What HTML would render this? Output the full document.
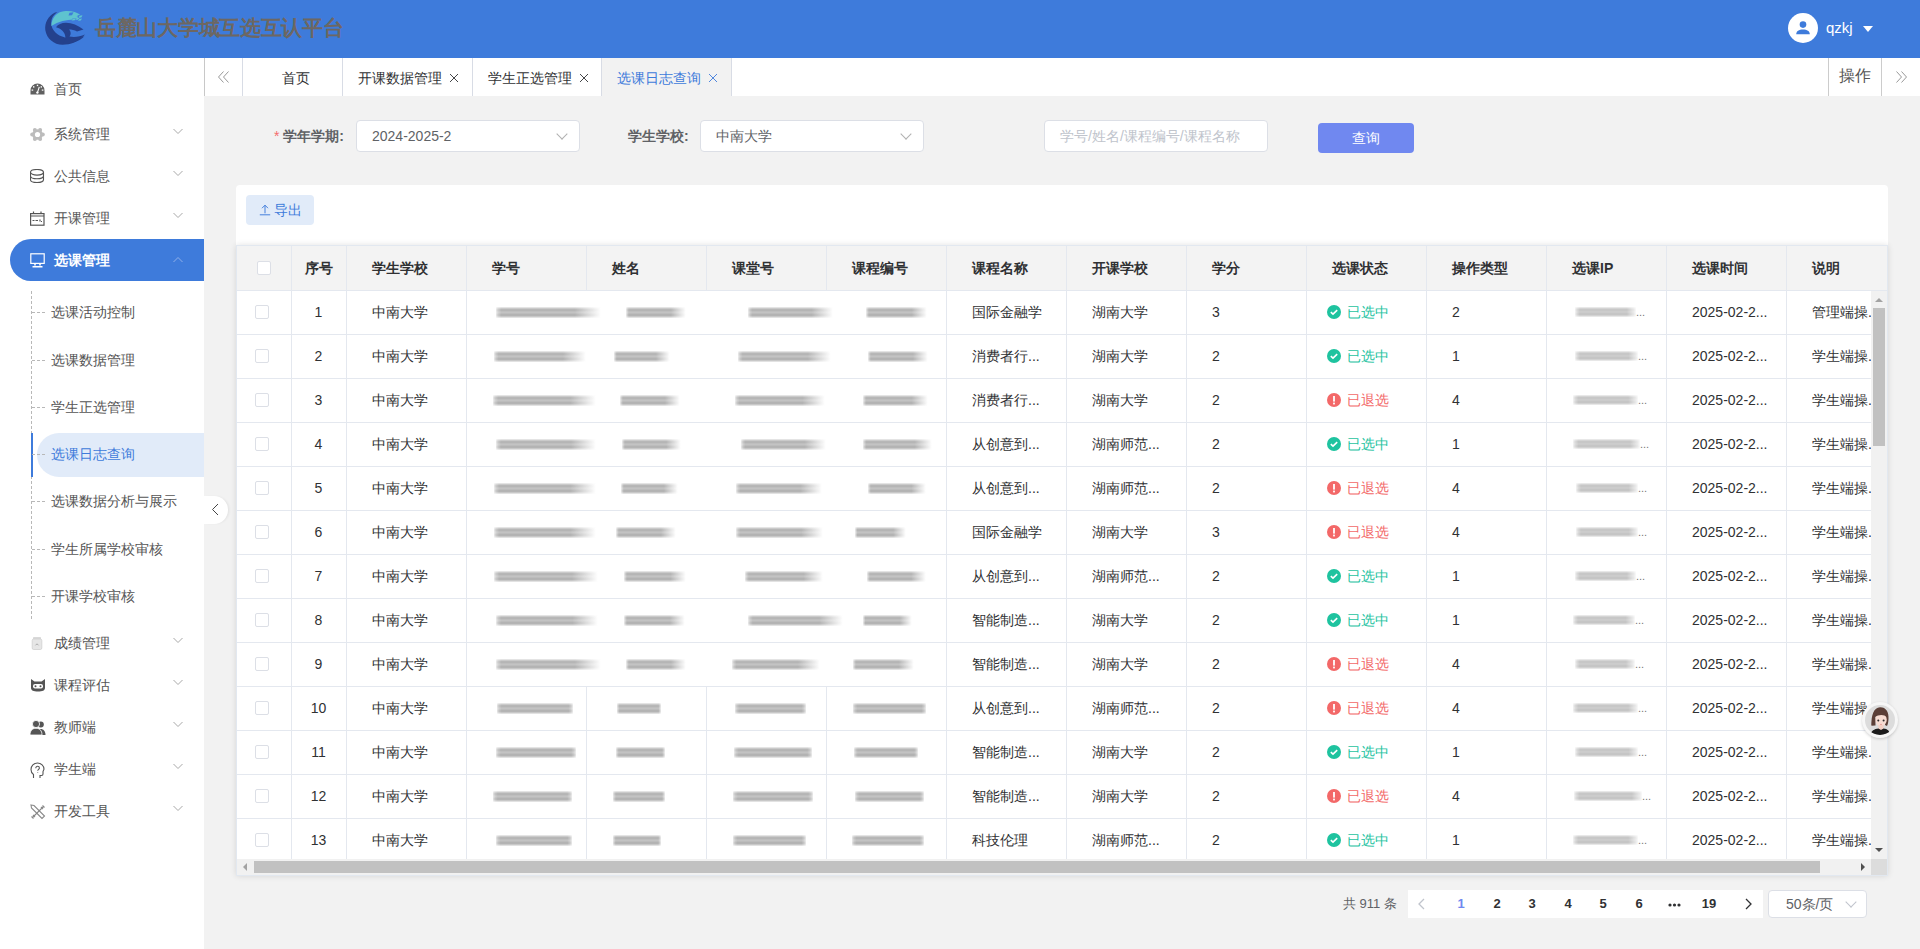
<!DOCTYPE html><html><head><meta charset="utf-8"><style>*{box-sizing:border-box;margin:0;padding:0}
html,body{width:1920px;height:949px;overflow:hidden}
body{position:relative;background:#f2f2f2;font-family:"Liberation Sans",sans-serif;font-size:14px;color:#303133}
.abs{position:absolute}
#hdr{position:absolute;left:0;top:0;width:1920px;height:58px;background:#3e7bdb}
#title{position:absolute;left:95px;top:14px;font-family:"Liberation Serif",serif;font-weight:bold;font-size:21px;color:#6d6762;letter-spacing:-0.3px;white-space:nowrap;line-height:28px}
#side{position:absolute;left:0;top:58px;width:204px;height:891px;background:#fff}
.mi{position:absolute;left:10px;width:194px;height:42px;color:#555;font-size:14px}
.mi .ic{position:absolute;left:20px;top:13px;width:16px;height:16px;line-height:0}
.mi .mt{position:absolute;left:44px;top:11px;line-height:20px}
.mi.act{background:#3e7bdb;border-radius:21px 0 0 21px;color:#fff;font-weight:bold}
.arr{position:absolute;left:163px;top:15px;width:10px;height:7px;line-height:0}

.vline{position:absolute;left:31px;top:291px;height:328px;width:0;border-left:1px dashed #b8b8b8}
.hdash{position:absolute;left:32px;width:13px;height:0;border-top:1px dashed #b8b8b8}
.si{position:absolute;left:51px;line-height:20px;color:#555;font-size:14px;white-space:nowrap}
.si.sact{color:#3e7bdb}
.subact{position:absolute;left:37px;width:167px;height:44px;background:#e1ebf9;border-radius:22px 0 0 22px}
.subbar{position:absolute;left:31px;width:2px;height:44px;background:#3e7bdb}
#tabs{position:absolute;left:204px;top:58px;width:1716px;height:38px;background:#fff}
.tab{position:absolute;top:0;height:38px;border-left:1px solid #d8dce5;line-height:40px;color:#303133;font-size:14px;white-space:nowrap}
.tab.act{background:#f2f2f2;color:#3e7bdb}
.tab .x{position:absolute;top:0;font-size:16px}
#card{position:absolute;left:236px;top:185px;width:1652px;height:691px;background:#fff;border-radius:4px}
.lbl{position:absolute;top:126px;font-weight:bold;color:#606266;line-height:20px;font-size:14px}
.sel{position:absolute;top:120px;height:32px;width:224px;background:#fff;border:1px solid #dcdfe6;border-radius:4px}
.sel .v{position:absolute;left:15px;top:5px;line-height:20px;color:#606266}
.sel .chev{position:absolute;right:13px;top:9px;width:8px;height:8px;border-right:1px solid #b0b0b0;border-bottom:1px solid #b0b0b0;transform:rotate(45deg)}
#tbl{position:absolute;left:236px;top:245px;width:1652px;height:631px;background:#fff;border:1px solid #e2e8f0;box-shadow:0 0 6px rgba(0,0,0,0.12)}
.thbg{position:absolute;left:237px;top:246px;width:1650px;height:44px;background:#f3f3f3}
.th{position:absolute;top:258px;line-height:20px;font-weight:bold;color:#303133;font-size:14px}
.td{position:absolute;line-height:22px;color:#303133;font-size:14px;white-space:nowrap}
.vb{position:absolute;width:1px;background:#e4e8ef}
.hb{position:absolute;left:237px;width:1634px;height:1px;background:#e4e8ef}
.cb{position:absolute;width:14px;height:14px;border:1px solid #dcdfe6;border-radius:2px;background:#fff}
.st{position:absolute;left:1327px;line-height:22px;font-size:14px;padding-left:20px;white-space:nowrap}
.st .sic{position:absolute;left:0;top:4px;line-height:0}
.st.ok{color:#1ec39f}
.st.no{color:#f36868}
.bl{position:absolute;height:11px;background:linear-gradient(to bottom,rgba(150,150,150,0) 0%,rgba(125,125,125,.75) 24%,rgba(200,200,200,.8) 50%,rgba(120,120,120,.75) 76%,rgba(150,150,150,0) 100%);filter:blur(1px);-webkit-mask-image:linear-gradient(to right,rgba(0,0,0,.5) 0%,#000 5%,#000 75%,rgba(0,0,0,0) 100%)}
.bl2{position:absolute;height:10px;background:linear-gradient(to bottom,rgba(150,150,150,0) 0%,rgba(130,130,130,.6) 24%,rgba(205,205,205,.7) 50%,rgba(125,125,125,.6) 76%,rgba(150,150,150,0) 100%);filter:blur(0.9px);-webkit-mask-image:linear-gradient(to right,rgba(0,0,0,.4) 0%,#000 8%,#000 85%,rgba(0,0,0,.2) 100%)}
</style></head><body><div id="hdr">
  <svg class="abs" style="left:0;top:0" width="100" height="58" viewBox="0 0 100 58">
    <path d="M55,12.5 C48,16 44.5,23 45.3,30 C46.5,38.5 54,44.8 62.5,44.8 C70.5,44.8 78.5,41.8 84.5,36.3 C78.5,38.8 71,39.3 65,37.5 C57,35.5 51.5,30 51.3,23.5 C51.2,18.5 53,15 57.5,12.3 Z" fill="#24418d"/>
    <path d="M51.3,26 C51.5,17.5 57,11.5 65.5,11 C72,10.7 77,12.3 80,14.5 L76.5,16.3 L80.5,17.2 L78,19.8 C70,19.2 60,20 51.3,26 Z" fill="#5ec3cf"/>
    <path d="M69.5,12.8 L73.5,12.3 L72,15.2 L68.5,15.5 Z M78.8,15.5 L82.5,15 L81,17.8 L77.5,18 Z M72.5,18.5 L76.5,18 L75,20.5 L71.2,20.8 Z M79,18.8 L82.3,18.3 L80.8,20.6 L77.5,20.9 Z" fill="#3e7bdb"/>
    <path d="M79.5,15.8 L82.5,15.3 L81.3,17.5 L78.5,17.8 Z M72.8,18.7 L76,18.3 L74.8,20.3 L71.6,20.6 Z M79.3,19 L82,18.6 L80.8,20.4 L78,20.7 Z" fill="#5ec3cf"/>
    <path d="M56,27.3 C58,24.3 61.5,22.8 66,22.8 C72,22.8 78,25.5 83.5,29.5 L77,31.5 C74.5,30.2 71.5,29.6 69,29.6 C71,31.5 71.3,34.5 69.5,36.5 C75,37.5 80,36.5 85,34.5 C80,40.5 72,44 63,43.5 C65,41 66,38 65,35 C63.8,31 60,28.2 56,27.3 Z" fill="#24418d"/>
  </svg>
  <div id="title">岳麓山大学城互选互认平台</div>
  <div class="abs" style="left:1788px;top:13px;width:30px;height:30px;border-radius:50%;background:#fff">
    <svg class="abs" style="left:8px;top:8px" width="14" height="14" viewBox="0 0 14 14"><circle cx="7" cy="3.6" r="3.3" fill="#3e7bdb"/><path d="M0.2 13.3C0.2 10 3 8.5 7 8.5S13.8 10 13.8 13.3Z" fill="#3e7bdb"/></svg>
  </div>
  <div class="abs" style="left:1826px;top:18px;color:#fff;font-size:15px;line-height:20px">qzkj</div>
  <div class="abs" style="left:1863px;top:26px;width:0;height:0;border-left:5px solid transparent;border-right:5px solid transparent;border-top:6px solid #fff"></div>
</div>
<div id="side">
</div>
<div class="abs" style="left:0;top:0"><div class="mi" style="top:68px"><span class="ic" style="top:14px"><svg width="15" height="13" viewBox="0 0 15 13" style="margin-top:1px"><path d="M7.5 0.5A7 7 0 0 0 0.5 7.5V11.5H14.5V7.5A7 7 0 0 0 7.5 0.5Z" fill="#606060"/><rect x="6.8" y="1.7" width="1.4" height="1.4" fill="#fff"/><rect x="3" y="3.2" width="1.4" height="1.4" fill="#fff"/><rect x="10.6" y="3.2" width="1.4" height="1.4" fill="#fff"/><rect x="1.6" y="6.5" width="1.6" height="1.2" fill="#fff"/><rect x="11.8" y="6.5" width="1.6" height="1.2" fill="#fff"/><path d="M9.3 3.8L7.6 9.2" stroke="#fff" stroke-width="1.1"/><circle cx="7.4" cy="9.6" r="1.2" fill="#fff"/></svg></span><span class="mt">首页</span></div>
<div class="mi" style="top:113px"><span class="ic" style="top:14px"><svg width="15" height="15" viewBox="0 0 15 15"><g fill="#bcbcbc"><circle cx="7.5" cy="7.5" r="5.3"/><circle cx="2.2" cy="7.5" r="2"/><circle cx="12.8" cy="7.5" r="2"/><circle cx="4.85" cy="2.9" r="2"/><circle cx="10.15" cy="2.9" r="2"/><circle cx="4.85" cy="12.1" r="2"/><circle cx="10.15" cy="12.1" r="2"/></g><circle cx="7.5" cy="7.5" r="2.6" fill="#fff"/></svg></span><span class="mt">系统管理</span><span class="arr"><svg width="10" height="7" viewBox="0 0 10 7" fill="none" stroke="#a8a8a8" stroke-width="1"><path d="M0.5 1L5 5.5L9.5 1"/></svg></span></div>
<div class="mi" style="top:155px"><span class="ic" style="top:14px"><svg width="15" height="15" viewBox="0 0 15 15" fill="none" stroke="#555" stroke-width="1.1"><ellipse cx="7" cy="3.3" rx="6.5" ry="2.8"/><path d="M0.5 3.3V7C0.5 8.6 3.4 9.8 7 9.8S13.5 8.6 13.5 7V3.3"/><path d="M0.5 7V10.7C0.5 12.3 3.4 13.5 7 13.5S13.5 12.3 13.5 10.7V7"/></svg></span><span class="mt">公共信息</span><span class="arr"><svg width="10" height="7" viewBox="0 0 10 7" fill="none" stroke="#a8a8a8" stroke-width="1"><path d="M0.5 1L5 5.5L9.5 1"/></svg></span></div>
<div class="mi" style="top:197px"><span class="ic" style="top:14px"><svg width="15" height="15" viewBox="0 0 15 15" fill="none" stroke="#555" stroke-width="1.2"><rect x="0.6" y="2.6" width="13.4" height="11.6"/><path d="M0.6 5H14M3.5 0.5V3M11 0.5V3M2.5 9.5H4.5M5.5 9.5H8M10 8.5V10.5M11 10.5H12"/></svg></span><span class="mt">开课管理</span><span class="arr"><svg width="10" height="7" viewBox="0 0 10 7" fill="none" stroke="#a8a8a8" stroke-width="1"><path d="M0.5 1L5 5.5L9.5 1"/></svg></span></div>
<div class="mi act" style="top:239px"><span class="ic" style="top:14px"><svg width="15" height="15" viewBox="0 0 15 15" fill="none" stroke="#fff" stroke-width="1.2"><rect x="0.8" y="0.8" width="13.4" height="9.6"/><path d="M5 10.5V12.5M10 10.5V12.5M2.5 13.8H12.5" stroke-width="1.6"/></svg></span><span class="mt">选课管理</span><span class="arr" style="top:17px"><svg width="10" height="7" viewBox="0 0 10 7" fill="none" stroke="#8fb0e8" stroke-width="1"><path d="M0.5 6L5 1.5L9.5 6"/></svg></span></div>
<div class="vline"></div>
<div class="hdash" style="top:312px"></div>
<div class="si" style="top:302px">选课活动控制</div>
<div class="hdash" style="top:360px"></div>
<div class="si" style="top:350px">选课数据管理</div>
<div class="hdash" style="top:407px"></div>
<div class="si" style="top:397px">学生正选管理</div>
<div class="subact" style="top:433px"></div><div class="subbar" style="top:433px"></div>
<div class="hdash" style="top:454px"></div>
<div class="si sact" style="top:444px">选课日志查询</div>
<div class="hdash" style="top:501px"></div>
<div class="si" style="top:491px">选课数据分析与展示</div>
<div class="hdash" style="top:549px"></div>
<div class="si" style="top:539px">学生所属学校审核</div>
<div class="hdash" style="top:596px"></div>
<div class="si" style="top:586px">开课学校审核</div>
<div class="mi" style="top:622px"><span class="ic" style="top:14px"><svg width="14" height="15" viewBox="0 0 14 15"><rect x="3" y="1" width="8" height="2.5" rx="0.8" fill="#d9d9d9"/><rect x="2.2" y="3" width="9.6" height="10.5" rx="1.5" fill="#e6e6e6" stroke="#cfcfcf" stroke-width="0.8"/><path d="M5.5 9.3L7 7.8L8.5 9.3" fill="none" stroke="#999" stroke-width="0.8"/></svg></span><span class="mt">成绩管理</span><span class="arr"><svg width="10" height="7" viewBox="0 0 10 7" fill="none" stroke="#a8a8a8" stroke-width="1"><path d="M0.5 1L5 5.5L9.5 1"/></svg></span></div>
<div class="mi" style="top:664px"><span class="ic" style="top:14px"><svg width="16" height="14" viewBox="0 0 16 14"><path d="M1 1L4.5 3.5H11.5L15 1V10C15 12.5 12.5 13.5 8 13.5S1 12.5 1 10Z" fill="#555"/><rect x="3" y="6" width="10" height="4.5" rx="2" fill="#fff"/><circle cx="5.5" cy="8.2" r="1" fill="#555"/><circle cx="10.5" cy="8.2" r="1" fill="#555"/></svg></span><span class="mt">课程评估</span><span class="arr"><svg width="10" height="7" viewBox="0 0 10 7" fill="none" stroke="#a8a8a8" stroke-width="1"><path d="M0.5 1L5 5.5L9.5 1"/></svg></span></div>
<div class="mi" style="top:706px"><span class="ic" style="top:14px"><svg width="16" height="15" viewBox="0 0 16 15"><circle cx="10.8" cy="4.5" r="3" fill="#555"/><path d="M8 15C8 11 9 9 11 9S15.5 11 15.5 15Z" fill="#555"/><circle cx="6" cy="4" r="3.6" fill="#555" stroke="#fff" stroke-width="0.8"/><path d="M0 15C0 10.5 2.5 8.3 6 8.3S12 10.5 12 15Z" fill="#555" stroke="#fff" stroke-width="0.8"/></svg></span><span class="mt">教师端</span><span class="arr"><svg width="10" height="7" viewBox="0 0 10 7" fill="none" stroke="#a8a8a8" stroke-width="1"><path d="M0.5 1L5 5.5L9.5 1"/></svg></span></div>
<div class="mi" style="top:748px"><span class="ic" style="top:14px"><svg width="15" height="17" viewBox="0 0 15 17" fill="none" stroke="#555" stroke-width="1.1"><path d="M3.5 16V12.5C1.8 11.3 1 9.5 1 7.5C1 3.8 3.8 1 7.5 1S14 3.8 14 7.2L13 9.5V12C13 12.8 12.3 13.5 11.5 13.5H10V16"/><path d="M5.8 6.2C5.8 5 6.6 4.3 7.6 4.3S9.4 5 9.4 6C9.4 7.3 7.7 7.5 7.7 8.8M7.7 10.3V10.8"/></svg></span><span class="mt">学生端</span><span class="arr"><svg width="10" height="7" viewBox="0 0 10 7" fill="none" stroke="#a8a8a8" stroke-width="1"><path d="M0.5 1L5 5.5L9.5 1"/></svg></span></div>
<div class="mi" style="top:790px"><span class="ic" style="top:14px"><svg width="16" height="16" viewBox="0 0 16 16" fill="none" stroke="#888" stroke-width="1.1"><path d="M1 1L4 1.5L14.5 12L12 14.5L1.5 4Z"/><path d="M2.5 13.5L13.5 2.5M1.5 12.5L3.5 14.5M12.5 1.5L14.5 3.5M3 11L5 13M11 3L13 5"/></svg></span><span class="mt">开发工具</span><span class="arr"><svg width="10" height="7" viewBox="0 0 10 7" fill="none" stroke="#a8a8a8" stroke-width="1"><path d="M0.5 1L5 5.5L9.5 1"/></svg></span></div></div>
<div id="tabs">
  <div class="tab" style="left:0;width:38px;border-color:#c8c8c8"><svg class="abs" style="left:13px;top:13px" width="11" height="12" viewBox="0 0 11 12" fill="none" stroke="#999" stroke-width="1"><path d="M5.5 0.5L0.5 6L5.5 11.5M10.5 0.5L5.5 6L10.5 11.5"/></svg></div>
  <div class="tab" style="left:38px;width:100px"><span class="abs" style="left:39px">首页</span></div>
  <div class="tab" style="left:138px;width:130px"><span class="abs" style="left:15px">开课数据管理</span><svg class="abs" style="left:106px;top:15px" width="10" height="10" viewBox="0 0 10 10" stroke="#303133" stroke-width="0.9"><path d="M1 1L9 9M9 1L1 9"/></svg></div>
  <div class="tab" style="left:268px;width:129px"><span class="abs" style="left:15px">学生正选管理</span><svg class="abs" style="left:106px;top:15px" width="10" height="10" viewBox="0 0 10 10" stroke="#303133" stroke-width="0.9"><path d="M1 1L9 9M9 1L1 9"/></svg></div>
  <div class="tab act" style="left:397px;width:130px"><span class="abs" style="left:15px">选课日志查询</span><svg class="abs" style="left:106px;top:15px" width="10" height="10" viewBox="0 0 10 10" stroke="#3e7bdb" stroke-width="0.9"><path d="M1 1L9 9M9 1L1 9"/></svg></div>
  <div class="tab" style="left:527px;width:0"></div>
  <div class="tab" style="left:1624px;width:53px;font-size:16px;color:#555;border-color:#ccc"><span class="abs" style="left:10px;top:-2px">操作</span></div>
  <div class="tab" style="left:1677px;width:39px;border-color:#ccc"><svg class="abs" style="left:14px;top:13px" width="11" height="12" viewBox="0 0 11 12" fill="none" stroke="#999" stroke-width="1"><path d="M0.5 0.5L5.5 6L0.5 11.5M5.5 0.5L10.5 6L5.5 11.5"/></svg></div>
</div>
<!-- filters -->
<div class="lbl" style="left:274px"><span style="color:#f56c6c;font-weight:normal">*</span> 学年学期:</div>
<div class="sel" style="left:356px"><span class="v">2024-2025-2</span><span class="chev"></span></div>
<div class="lbl" style="left:628px">学生学校:</div>
<div class="sel" style="left:700px"><span class="v">中南大学</span><span class="chev"></span></div>
<div class="sel" style="left:1044px;width:224px"><span class="v" style="color:#c0c4cc">学号/姓名/课程编号/课程名称</span></div>
<div class="abs" style="left:1318px;top:123px;width:96px;height:30px;background:#7088f0;border-radius:4px;color:#fff;text-align:center;line-height:30px">查询</div>
<div id="card"></div>
<div class="abs" style="left:246px;top:195px;width:68px;height:30px;background:#e1ebf9;border-radius:4px;color:#3e7bdb;line-height:30px;font-size:14px"><svg class="abs" style="left:13px;top:9px" width="12" height="12" viewBox="0 0 12 12" fill="none" stroke="#3e7bdb" stroke-width="0.95"><path d="M3 4.2L6 1.2L9 4.2M6 1.2V9.3M0.8 10.8H11.2"/></svg><span class="abs" style="left:28px">导出</span></div>
<div id="tbl"></div>
<div class="thbg"></div>
<div class="hb" style="top:290px;width:1650px"></div>
<div class="cb" style="left:257px;top:261px;background:#fff"></div>
<div class="th" style="left:291px;width:55px;text-align:center">序号</div>
<div class="th" style="left:372px">学生学校</div>
<div class="th" style="left:492px">学号</div>
<div class="th" style="left:612px">姓名</div>
<div class="th" style="left:732px">课堂号</div>
<div class="th" style="left:852px">课程编号</div>
<div class="th" style="left:972px">课程名称</div>
<div class="th" style="left:1092px">开课学校</div>
<div class="th" style="left:1212px">学分</div>
<div class="th" style="left:1332px">选课状态</div>
<div class="th" style="left:1452px">操作类型</div>
<div class="th" style="left:1572px">选课IP</div>
<div class="th" style="left:1692px">选课时间</div>
<div class="th" style="left:1812px">说明</div>
<div class="vb" style="left:291px;top:246px;height:44px"></div>
<div class="vb" style="left:346px;top:246px;height:44px"></div>
<div class="vb" style="left:466px;top:246px;height:44px"></div>
<div class="vb" style="left:586px;top:246px;height:44px"></div>
<div class="vb" style="left:706px;top:246px;height:44px"></div>
<div class="vb" style="left:826px;top:246px;height:44px"></div>
<div class="vb" style="left:946px;top:246px;height:44px"></div>
<div class="vb" style="left:1066px;top:246px;height:44px"></div>
<div class="vb" style="left:1186px;top:246px;height:44px"></div>
<div class="vb" style="left:1306px;top:246px;height:44px"></div>
<div class="vb" style="left:1426px;top:246px;height:44px"></div>
<div class="vb" style="left:1546px;top:246px;height:44px"></div>
<div class="vb" style="left:1666px;top:246px;height:44px"></div>
<div class="vb" style="left:1786px;top:246px;height:44px"></div>
<div class="hb" style="top:290px"></div>
<div class="cb" style="left:255px;top:305px"></div>
<div class="td" style="left:291px;width:55px;text-align:center;top:301px">1</div>
<div class="td" style="left:372px;top:301px">中南大学</div>
<div class="td" style="left:972px;top:301px">国际金融学</div>
<div class="td" style="left:1092px;top:301px">湖南大学</div>
<div class="td" style="left:1212px;top:301px">3</div>
<div class="st ok" style="top:301px"><span class="sic"><svg width="14" height="14" viewBox="0 0 14 14"><circle cx="7" cy="7" r="7" fill="#1ec39f"/><path d="M3.8 7.2L6 9.2L10.2 5.2" fill="none" stroke="#fff" stroke-width="1.6"/></svg></span>已选中</div>
<div class="td" style="left:1452px;top:301px">2</div>
<div class="td" style="left:1692px;top:301px">2025-02-2...</div>
<div class="td" style="left:1812px;top:301px">管理端操...</div>
<div class="bl" style="left:496px;width:105px;top:307px"></div>
<div class="bl" style="left:626px;width:60px;top:307px"></div>
<div class="bl" style="left:748px;width:85px;top:307px"></div>
<div class="bl" style="left:866px;width:61px;top:307px"></div>
<div class="bl2" style="left:1575px;width:61px;top:307px"></div>
<div class="td" style="left:1636px;top:301px;color:#777;font-size:11px;letter-spacing:0px">...</div>
<div class="vb" style="left:291px;top:290px;height:44px"></div>
<div class="vb" style="left:346px;top:290px;height:44px"></div>
<div class="vb" style="left:466px;top:290px;height:44px"></div>
<div class="vb" style="left:946px;top:290px;height:44px"></div>
<div class="vb" style="left:1066px;top:290px;height:44px"></div>
<div class="vb" style="left:1186px;top:290px;height:44px"></div>
<div class="vb" style="left:1306px;top:290px;height:44px"></div>
<div class="vb" style="left:1426px;top:290px;height:44px"></div>
<div class="vb" style="left:1546px;top:290px;height:44px"></div>
<div class="vb" style="left:1666px;top:290px;height:44px"></div>
<div class="vb" style="left:1786px;top:290px;height:44px"></div>
<div class="hb" style="top:334px"></div>
<div class="cb" style="left:255px;top:349px"></div>
<div class="td" style="left:291px;width:55px;text-align:center;top:345px">2</div>
<div class="td" style="left:372px;top:345px">中南大学</div>
<div class="td" style="left:972px;top:345px">消费者行...</div>
<div class="td" style="left:1092px;top:345px">湖南大学</div>
<div class="td" style="left:1212px;top:345px">2</div>
<div class="st ok" style="top:345px"><span class="sic"><svg width="14" height="14" viewBox="0 0 14 14"><circle cx="7" cy="7" r="7" fill="#1ec39f"/><path d="M3.8 7.2L6 9.2L10.2 5.2" fill="none" stroke="#fff" stroke-width="1.6"/></svg></span>已选中</div>
<div class="td" style="left:1452px;top:345px">1</div>
<div class="td" style="left:1692px;top:345px">2025-02-2...</div>
<div class="td" style="left:1812px;top:345px">学生端操...</div>
<div class="bl" style="left:494px;width:92px;top:351px"></div>
<div class="bl" style="left:614px;width:56px;top:351px"></div>
<div class="bl" style="left:738px;width:93px;top:351px"></div>
<div class="bl" style="left:868px;width:60px;top:351px"></div>
<div class="bl2" style="left:1575px;width:63px;top:351px"></div>
<div class="td" style="left:1638px;top:345px;color:#777;font-size:11px;letter-spacing:0px">...</div>
<div class="vb" style="left:291px;top:334px;height:44px"></div>
<div class="vb" style="left:346px;top:334px;height:44px"></div>
<div class="vb" style="left:466px;top:334px;height:44px"></div>
<div class="vb" style="left:946px;top:334px;height:44px"></div>
<div class="vb" style="left:1066px;top:334px;height:44px"></div>
<div class="vb" style="left:1186px;top:334px;height:44px"></div>
<div class="vb" style="left:1306px;top:334px;height:44px"></div>
<div class="vb" style="left:1426px;top:334px;height:44px"></div>
<div class="vb" style="left:1546px;top:334px;height:44px"></div>
<div class="vb" style="left:1666px;top:334px;height:44px"></div>
<div class="vb" style="left:1786px;top:334px;height:44px"></div>
<div class="hb" style="top:378px"></div>
<div class="cb" style="left:255px;top:393px"></div>
<div class="td" style="left:291px;width:55px;text-align:center;top:389px">3</div>
<div class="td" style="left:372px;top:389px">中南大学</div>
<div class="td" style="left:972px;top:389px">消费者行...</div>
<div class="td" style="left:1092px;top:389px">湖南大学</div>
<div class="td" style="left:1212px;top:389px">2</div>
<div class="st no" style="top:389px"><span class="sic"><svg width="14" height="14" viewBox="0 0 14 14"><circle cx="7" cy="7" r="7" fill="#f36868"/><rect x="6.1" y="3" width="1.8" height="5.6" fill="#fff"/><rect x="6.1" y="9.6" width="1.8" height="1.8" fill="#fff"/></svg></span>已退选</div>
<div class="td" style="left:1452px;top:389px">4</div>
<div class="td" style="left:1692px;top:389px">2025-02-2...</div>
<div class="td" style="left:1812px;top:389px">学生端操...</div>
<div class="bl" style="left:493px;width:103px;top:395px"></div>
<div class="bl" style="left:620px;width:60px;top:395px"></div>
<div class="bl" style="left:735px;width:90px;top:395px"></div>
<div class="bl" style="left:863px;width:65px;top:395px"></div>
<div class="bl2" style="left:1573px;width:65px;top:395px"></div>
<div class="td" style="left:1638px;top:389px;color:#777;font-size:11px;letter-spacing:0px">...</div>
<div class="vb" style="left:291px;top:378px;height:44px"></div>
<div class="vb" style="left:346px;top:378px;height:44px"></div>
<div class="vb" style="left:466px;top:378px;height:44px"></div>
<div class="vb" style="left:946px;top:378px;height:44px"></div>
<div class="vb" style="left:1066px;top:378px;height:44px"></div>
<div class="vb" style="left:1186px;top:378px;height:44px"></div>
<div class="vb" style="left:1306px;top:378px;height:44px"></div>
<div class="vb" style="left:1426px;top:378px;height:44px"></div>
<div class="vb" style="left:1546px;top:378px;height:44px"></div>
<div class="vb" style="left:1666px;top:378px;height:44px"></div>
<div class="vb" style="left:1786px;top:378px;height:44px"></div>
<div class="hb" style="top:422px"></div>
<div class="cb" style="left:255px;top:437px"></div>
<div class="td" style="left:291px;width:55px;text-align:center;top:433px">4</div>
<div class="td" style="left:372px;top:433px">中南大学</div>
<div class="td" style="left:972px;top:433px">从创意到...</div>
<div class="td" style="left:1092px;top:433px">湖南师范...</div>
<div class="td" style="left:1212px;top:433px">2</div>
<div class="st ok" style="top:433px"><span class="sic"><svg width="14" height="14" viewBox="0 0 14 14"><circle cx="7" cy="7" r="7" fill="#1ec39f"/><path d="M3.8 7.2L6 9.2L10.2 5.2" fill="none" stroke="#fff" stroke-width="1.6"/></svg></span>已选中</div>
<div class="td" style="left:1452px;top:433px">1</div>
<div class="td" style="left:1692px;top:433px">2025-02-2...</div>
<div class="td" style="left:1812px;top:433px">学生端操...</div>
<div class="bl" style="left:496px;width:100px;top:439px"></div>
<div class="bl" style="left:622px;width:59px;top:439px"></div>
<div class="bl" style="left:741px;width:85px;top:439px"></div>
<div class="bl" style="left:863px;width:69px;top:439px"></div>
<div class="bl2" style="left:1573px;width:67px;top:439px"></div>
<div class="td" style="left:1640px;top:433px;color:#777;font-size:11px;letter-spacing:0px">...</div>
<div class="vb" style="left:291px;top:422px;height:44px"></div>
<div class="vb" style="left:346px;top:422px;height:44px"></div>
<div class="vb" style="left:466px;top:422px;height:44px"></div>
<div class="vb" style="left:946px;top:422px;height:44px"></div>
<div class="vb" style="left:1066px;top:422px;height:44px"></div>
<div class="vb" style="left:1186px;top:422px;height:44px"></div>
<div class="vb" style="left:1306px;top:422px;height:44px"></div>
<div class="vb" style="left:1426px;top:422px;height:44px"></div>
<div class="vb" style="left:1546px;top:422px;height:44px"></div>
<div class="vb" style="left:1666px;top:422px;height:44px"></div>
<div class="vb" style="left:1786px;top:422px;height:44px"></div>
<div class="hb" style="top:466px"></div>
<div class="cb" style="left:255px;top:481px"></div>
<div class="td" style="left:291px;width:55px;text-align:center;top:477px">5</div>
<div class="td" style="left:372px;top:477px">中南大学</div>
<div class="td" style="left:972px;top:477px">从创意到...</div>
<div class="td" style="left:1092px;top:477px">湖南师范...</div>
<div class="td" style="left:1212px;top:477px">2</div>
<div class="st no" style="top:477px"><span class="sic"><svg width="14" height="14" viewBox="0 0 14 14"><circle cx="7" cy="7" r="7" fill="#f36868"/><rect x="6.1" y="3" width="1.8" height="5.6" fill="#fff"/><rect x="6.1" y="9.6" width="1.8" height="1.8" fill="#fff"/></svg></span>已退选</div>
<div class="td" style="left:1452px;top:477px">4</div>
<div class="td" style="left:1692px;top:477px">2025-02-2...</div>
<div class="td" style="left:1812px;top:477px">学生端操...</div>
<div class="bl" style="left:494px;width:102px;top:483px"></div>
<div class="bl" style="left:621px;width:57px;top:483px"></div>
<div class="bl" style="left:736px;width:86px;top:483px"></div>
<div class="bl" style="left:868px;width:58px;top:483px"></div>
<div class="bl2" style="left:1576px;width:62px;top:483px"></div>
<div class="td" style="left:1638px;top:477px;color:#777;font-size:11px;letter-spacing:0px">...</div>
<div class="vb" style="left:291px;top:466px;height:44px"></div>
<div class="vb" style="left:346px;top:466px;height:44px"></div>
<div class="vb" style="left:466px;top:466px;height:44px"></div>
<div class="vb" style="left:946px;top:466px;height:44px"></div>
<div class="vb" style="left:1066px;top:466px;height:44px"></div>
<div class="vb" style="left:1186px;top:466px;height:44px"></div>
<div class="vb" style="left:1306px;top:466px;height:44px"></div>
<div class="vb" style="left:1426px;top:466px;height:44px"></div>
<div class="vb" style="left:1546px;top:466px;height:44px"></div>
<div class="vb" style="left:1666px;top:466px;height:44px"></div>
<div class="vb" style="left:1786px;top:466px;height:44px"></div>
<div class="hb" style="top:510px"></div>
<div class="cb" style="left:255px;top:525px"></div>
<div class="td" style="left:291px;width:55px;text-align:center;top:521px">6</div>
<div class="td" style="left:372px;top:521px">中南大学</div>
<div class="td" style="left:972px;top:521px">国际金融学</div>
<div class="td" style="left:1092px;top:521px">湖南大学</div>
<div class="td" style="left:1212px;top:521px">3</div>
<div class="st no" style="top:521px"><span class="sic"><svg width="14" height="14" viewBox="0 0 14 14"><circle cx="7" cy="7" r="7" fill="#f36868"/><rect x="6.1" y="3" width="1.8" height="5.6" fill="#fff"/><rect x="6.1" y="9.6" width="1.8" height="1.8" fill="#fff"/></svg></span>已退选</div>
<div class="td" style="left:1452px;top:521px">4</div>
<div class="td" style="left:1692px;top:521px">2025-02-2...</div>
<div class="td" style="left:1812px;top:521px">学生端操...</div>
<div class="bl" style="left:494px;width:102px;top:527px"></div>
<div class="bl" style="left:616px;width:60px;top:527px"></div>
<div class="bl" style="left:736px;width:87px;top:527px"></div>
<div class="bl" style="left:855px;width:51px;top:527px"></div>
<div class="bl2" style="left:1576px;width:62px;top:527px"></div>
<div class="td" style="left:1638px;top:521px;color:#777;font-size:11px;letter-spacing:0px">...</div>
<div class="vb" style="left:291px;top:510px;height:44px"></div>
<div class="vb" style="left:346px;top:510px;height:44px"></div>
<div class="vb" style="left:466px;top:510px;height:44px"></div>
<div class="vb" style="left:946px;top:510px;height:44px"></div>
<div class="vb" style="left:1066px;top:510px;height:44px"></div>
<div class="vb" style="left:1186px;top:510px;height:44px"></div>
<div class="vb" style="left:1306px;top:510px;height:44px"></div>
<div class="vb" style="left:1426px;top:510px;height:44px"></div>
<div class="vb" style="left:1546px;top:510px;height:44px"></div>
<div class="vb" style="left:1666px;top:510px;height:44px"></div>
<div class="vb" style="left:1786px;top:510px;height:44px"></div>
<div class="hb" style="top:554px"></div>
<div class="cb" style="left:255px;top:569px"></div>
<div class="td" style="left:291px;width:55px;text-align:center;top:565px">7</div>
<div class="td" style="left:372px;top:565px">中南大学</div>
<div class="td" style="left:972px;top:565px">从创意到...</div>
<div class="td" style="left:1092px;top:565px">湖南师范...</div>
<div class="td" style="left:1212px;top:565px">2</div>
<div class="st ok" style="top:565px"><span class="sic"><svg width="14" height="14" viewBox="0 0 14 14"><circle cx="7" cy="7" r="7" fill="#1ec39f"/><path d="M3.8 7.2L6 9.2L10.2 5.2" fill="none" stroke="#fff" stroke-width="1.6"/></svg></span>已选中</div>
<div class="td" style="left:1452px;top:565px">1</div>
<div class="td" style="left:1692px;top:565px">2025-02-2...</div>
<div class="td" style="left:1812px;top:565px">学生端操...</div>
<div class="bl" style="left:494px;width:104px;top:571px"></div>
<div class="bl" style="left:624px;width:62px;top:571px"></div>
<div class="bl" style="left:745px;width:78px;top:571px"></div>
<div class="bl" style="left:867px;width:59px;top:571px"></div>
<div class="bl2" style="left:1575px;width:61px;top:571px"></div>
<div class="td" style="left:1636px;top:565px;color:#777;font-size:11px;letter-spacing:0px">...</div>
<div class="vb" style="left:291px;top:554px;height:44px"></div>
<div class="vb" style="left:346px;top:554px;height:44px"></div>
<div class="vb" style="left:466px;top:554px;height:44px"></div>
<div class="vb" style="left:946px;top:554px;height:44px"></div>
<div class="vb" style="left:1066px;top:554px;height:44px"></div>
<div class="vb" style="left:1186px;top:554px;height:44px"></div>
<div class="vb" style="left:1306px;top:554px;height:44px"></div>
<div class="vb" style="left:1426px;top:554px;height:44px"></div>
<div class="vb" style="left:1546px;top:554px;height:44px"></div>
<div class="vb" style="left:1666px;top:554px;height:44px"></div>
<div class="vb" style="left:1786px;top:554px;height:44px"></div>
<div class="hb" style="top:598px"></div>
<div class="cb" style="left:255px;top:613px"></div>
<div class="td" style="left:291px;width:55px;text-align:center;top:609px">8</div>
<div class="td" style="left:372px;top:609px">中南大学</div>
<div class="td" style="left:972px;top:609px">智能制造...</div>
<div class="td" style="left:1092px;top:609px">湖南大学</div>
<div class="td" style="left:1212px;top:609px">2</div>
<div class="st ok" style="top:609px"><span class="sic"><svg width="14" height="14" viewBox="0 0 14 14"><circle cx="7" cy="7" r="7" fill="#1ec39f"/><path d="M3.8 7.2L6 9.2L10.2 5.2" fill="none" stroke="#fff" stroke-width="1.6"/></svg></span>已选中</div>
<div class="td" style="left:1452px;top:609px">1</div>
<div class="td" style="left:1692px;top:609px">2025-02-2...</div>
<div class="td" style="left:1812px;top:609px">学生端操...</div>
<div class="bl" style="left:496px;width:102px;top:615px"></div>
<div class="bl" style="left:624px;width:61px;top:615px"></div>
<div class="bl" style="left:748px;width:95px;top:615px"></div>
<div class="bl" style="left:863px;width:49px;top:615px"></div>
<div class="bl2" style="left:1573px;width:62px;top:615px"></div>
<div class="td" style="left:1635px;top:609px;color:#777;font-size:11px;letter-spacing:0px">...</div>
<div class="vb" style="left:291px;top:598px;height:44px"></div>
<div class="vb" style="left:346px;top:598px;height:44px"></div>
<div class="vb" style="left:466px;top:598px;height:44px"></div>
<div class="vb" style="left:946px;top:598px;height:44px"></div>
<div class="vb" style="left:1066px;top:598px;height:44px"></div>
<div class="vb" style="left:1186px;top:598px;height:44px"></div>
<div class="vb" style="left:1306px;top:598px;height:44px"></div>
<div class="vb" style="left:1426px;top:598px;height:44px"></div>
<div class="vb" style="left:1546px;top:598px;height:44px"></div>
<div class="vb" style="left:1666px;top:598px;height:44px"></div>
<div class="vb" style="left:1786px;top:598px;height:44px"></div>
<div class="hb" style="top:642px"></div>
<div class="cb" style="left:255px;top:657px"></div>
<div class="td" style="left:291px;width:55px;text-align:center;top:653px">9</div>
<div class="td" style="left:372px;top:653px">中南大学</div>
<div class="td" style="left:972px;top:653px">智能制造...</div>
<div class="td" style="left:1092px;top:653px">湖南大学</div>
<div class="td" style="left:1212px;top:653px">2</div>
<div class="st no" style="top:653px"><span class="sic"><svg width="14" height="14" viewBox="0 0 14 14"><circle cx="7" cy="7" r="7" fill="#f36868"/><rect x="6.1" y="3" width="1.8" height="5.6" fill="#fff"/><rect x="6.1" y="9.6" width="1.8" height="1.8" fill="#fff"/></svg></span>已退选</div>
<div class="td" style="left:1452px;top:653px">4</div>
<div class="td" style="left:1692px;top:653px">2025-02-2...</div>
<div class="td" style="left:1812px;top:653px">学生端操...</div>
<div class="bl" style="left:496px;width:105px;top:659px"></div>
<div class="bl" style="left:626px;width:60px;top:659px"></div>
<div class="bl" style="left:732px;width:88px;top:659px"></div>
<div class="bl" style="left:853px;width:61px;top:659px"></div>
<div class="bl2" style="left:1575px;width:60px;top:659px"></div>
<div class="td" style="left:1635px;top:653px;color:#777;font-size:11px;letter-spacing:0px">...</div>
<div class="vb" style="left:291px;top:642px;height:44px"></div>
<div class="vb" style="left:346px;top:642px;height:44px"></div>
<div class="vb" style="left:466px;top:642px;height:44px"></div>
<div class="vb" style="left:946px;top:642px;height:44px"></div>
<div class="vb" style="left:1066px;top:642px;height:44px"></div>
<div class="vb" style="left:1186px;top:642px;height:44px"></div>
<div class="vb" style="left:1306px;top:642px;height:44px"></div>
<div class="vb" style="left:1426px;top:642px;height:44px"></div>
<div class="vb" style="left:1546px;top:642px;height:44px"></div>
<div class="vb" style="left:1666px;top:642px;height:44px"></div>
<div class="vb" style="left:1786px;top:642px;height:44px"></div>
<div class="hb" style="top:686px"></div>
<div class="cb" style="left:255px;top:701px"></div>
<div class="td" style="left:291px;width:55px;text-align:center;top:697px">10</div>
<div class="td" style="left:372px;top:697px">中南大学</div>
<div class="td" style="left:972px;top:697px">从创意到...</div>
<div class="td" style="left:1092px;top:697px">湖南师范...</div>
<div class="td" style="left:1212px;top:697px">2</div>
<div class="st no" style="top:697px"><span class="sic"><svg width="14" height="14" viewBox="0 0 14 14"><circle cx="7" cy="7" r="7" fill="#f36868"/><rect x="6.1" y="3" width="1.8" height="5.6" fill="#fff"/><rect x="6.1" y="9.6" width="1.8" height="1.8" fill="#fff"/></svg></span>已退选</div>
<div class="td" style="left:1452px;top:697px">4</div>
<div class="td" style="left:1692px;top:697px">2025-02-2...</div>
<div class="td" style="left:1812px;top:697px">学生端操...</div>
<div class="bl" style="left:497px;width:76px;top:703px;-webkit-mask-image:linear-gradient(to right,rgba(0,0,0,.6) 0%,#000 6%,#000 94%,rgba(0,0,0,.5) 100%)"></div>
<div class="bl" style="left:617px;width:44px;top:703px;-webkit-mask-image:linear-gradient(to right,rgba(0,0,0,.6) 0%,#000 6%,#000 94%,rgba(0,0,0,.5) 100%)"></div>
<div class="bl" style="left:735px;width:71px;top:703px;-webkit-mask-image:linear-gradient(to right,rgba(0,0,0,.6) 0%,#000 6%,#000 94%,rgba(0,0,0,.5) 100%)"></div>
<div class="bl" style="left:853px;width:73px;top:703px;-webkit-mask-image:linear-gradient(to right,rgba(0,0,0,.6) 0%,#000 6%,#000 94%,rgba(0,0,0,.5) 100%)"></div>
<div class="bl2" style="left:1573px;width:65px;top:703px"></div>
<div class="td" style="left:1638px;top:697px;color:#777;font-size:11px;letter-spacing:0px">...</div>
<div class="vb" style="left:291px;top:686px;height:44px"></div>
<div class="vb" style="left:346px;top:686px;height:44px"></div>
<div class="vb" style="left:466px;top:686px;height:44px"></div>
<div class="vb" style="left:586px;top:686px;height:44px"></div>
<div class="vb" style="left:706px;top:686px;height:44px"></div>
<div class="vb" style="left:826px;top:686px;height:44px"></div>
<div class="vb" style="left:946px;top:686px;height:44px"></div>
<div class="vb" style="left:1066px;top:686px;height:44px"></div>
<div class="vb" style="left:1186px;top:686px;height:44px"></div>
<div class="vb" style="left:1306px;top:686px;height:44px"></div>
<div class="vb" style="left:1426px;top:686px;height:44px"></div>
<div class="vb" style="left:1546px;top:686px;height:44px"></div>
<div class="vb" style="left:1666px;top:686px;height:44px"></div>
<div class="vb" style="left:1786px;top:686px;height:44px"></div>
<div class="hb" style="top:730px"></div>
<div class="cb" style="left:255px;top:745px"></div>
<div class="td" style="left:291px;width:55px;text-align:center;top:741px">11</div>
<div class="td" style="left:372px;top:741px">中南大学</div>
<div class="td" style="left:972px;top:741px">智能制造...</div>
<div class="td" style="left:1092px;top:741px">湖南大学</div>
<div class="td" style="left:1212px;top:741px">2</div>
<div class="st ok" style="top:741px"><span class="sic"><svg width="14" height="14" viewBox="0 0 14 14"><circle cx="7" cy="7" r="7" fill="#1ec39f"/><path d="M3.8 7.2L6 9.2L10.2 5.2" fill="none" stroke="#fff" stroke-width="1.6"/></svg></span>已选中</div>
<div class="td" style="left:1452px;top:741px">1</div>
<div class="td" style="left:1692px;top:741px">2025-02-2...</div>
<div class="td" style="left:1812px;top:741px">学生端操...</div>
<div class="bl" style="left:496px;width:80px;top:747px;-webkit-mask-image:linear-gradient(to right,rgba(0,0,0,.6) 0%,#000 6%,#000 94%,rgba(0,0,0,.5) 100%)"></div>
<div class="bl" style="left:616px;width:49px;top:747px;-webkit-mask-image:linear-gradient(to right,rgba(0,0,0,.6) 0%,#000 6%,#000 94%,rgba(0,0,0,.5) 100%)"></div>
<div class="bl" style="left:734px;width:78px;top:747px;-webkit-mask-image:linear-gradient(to right,rgba(0,0,0,.6) 0%,#000 6%,#000 94%,rgba(0,0,0,.5) 100%)"></div>
<div class="bl" style="left:854px;width:64px;top:747px;-webkit-mask-image:linear-gradient(to right,rgba(0,0,0,.6) 0%,#000 6%,#000 94%,rgba(0,0,0,.5) 100%)"></div>
<div class="bl2" style="left:1575px;width:63px;top:747px"></div>
<div class="td" style="left:1638px;top:741px;color:#777;font-size:11px;letter-spacing:0px">...</div>
<div class="vb" style="left:291px;top:730px;height:44px"></div>
<div class="vb" style="left:346px;top:730px;height:44px"></div>
<div class="vb" style="left:466px;top:730px;height:44px"></div>
<div class="vb" style="left:586px;top:730px;height:44px"></div>
<div class="vb" style="left:706px;top:730px;height:44px"></div>
<div class="vb" style="left:826px;top:730px;height:44px"></div>
<div class="vb" style="left:946px;top:730px;height:44px"></div>
<div class="vb" style="left:1066px;top:730px;height:44px"></div>
<div class="vb" style="left:1186px;top:730px;height:44px"></div>
<div class="vb" style="left:1306px;top:730px;height:44px"></div>
<div class="vb" style="left:1426px;top:730px;height:44px"></div>
<div class="vb" style="left:1546px;top:730px;height:44px"></div>
<div class="vb" style="left:1666px;top:730px;height:44px"></div>
<div class="vb" style="left:1786px;top:730px;height:44px"></div>
<div class="hb" style="top:774px"></div>
<div class="cb" style="left:255px;top:789px"></div>
<div class="td" style="left:291px;width:55px;text-align:center;top:785px">12</div>
<div class="td" style="left:372px;top:785px">中南大学</div>
<div class="td" style="left:972px;top:785px">智能制造...</div>
<div class="td" style="left:1092px;top:785px">湖南大学</div>
<div class="td" style="left:1212px;top:785px">2</div>
<div class="st no" style="top:785px"><span class="sic"><svg width="14" height="14" viewBox="0 0 14 14"><circle cx="7" cy="7" r="7" fill="#f36868"/><rect x="6.1" y="3" width="1.8" height="5.6" fill="#fff"/><rect x="6.1" y="9.6" width="1.8" height="1.8" fill="#fff"/></svg></span>已退选</div>
<div class="td" style="left:1452px;top:785px">4</div>
<div class="td" style="left:1692px;top:785px">2025-02-2...</div>
<div class="td" style="left:1812px;top:785px">学生端操...</div>
<div class="bl" style="left:493px;width:79px;top:791px;-webkit-mask-image:linear-gradient(to right,rgba(0,0,0,.6) 0%,#000 6%,#000 94%,rgba(0,0,0,.5) 100%)"></div>
<div class="bl" style="left:613px;width:52px;top:791px;-webkit-mask-image:linear-gradient(to right,rgba(0,0,0,.6) 0%,#000 6%,#000 94%,rgba(0,0,0,.5) 100%)"></div>
<div class="bl" style="left:733px;width:80px;top:791px;-webkit-mask-image:linear-gradient(to right,rgba(0,0,0,.6) 0%,#000 6%,#000 94%,rgba(0,0,0,.5) 100%)"></div>
<div class="bl" style="left:855px;width:69px;top:791px;-webkit-mask-image:linear-gradient(to right,rgba(0,0,0,.6) 0%,#000 6%,#000 94%,rgba(0,0,0,.5) 100%)"></div>
<div class="bl2" style="left:1574px;width:68px;top:791px"></div>
<div class="td" style="left:1642px;top:785px;color:#777;font-size:11px;letter-spacing:0px">...</div>
<div class="vb" style="left:291px;top:774px;height:44px"></div>
<div class="vb" style="left:346px;top:774px;height:44px"></div>
<div class="vb" style="left:466px;top:774px;height:44px"></div>
<div class="vb" style="left:586px;top:774px;height:44px"></div>
<div class="vb" style="left:706px;top:774px;height:44px"></div>
<div class="vb" style="left:826px;top:774px;height:44px"></div>
<div class="vb" style="left:946px;top:774px;height:44px"></div>
<div class="vb" style="left:1066px;top:774px;height:44px"></div>
<div class="vb" style="left:1186px;top:774px;height:44px"></div>
<div class="vb" style="left:1306px;top:774px;height:44px"></div>
<div class="vb" style="left:1426px;top:774px;height:44px"></div>
<div class="vb" style="left:1546px;top:774px;height:44px"></div>
<div class="vb" style="left:1666px;top:774px;height:44px"></div>
<div class="vb" style="left:1786px;top:774px;height:44px"></div>
<div class="hb" style="top:818px"></div>
<div class="cb" style="left:255px;top:833px"></div>
<div class="td" style="left:291px;width:55px;text-align:center;top:829px">13</div>
<div class="td" style="left:372px;top:829px">中南大学</div>
<div class="td" style="left:972px;top:829px">科技伦理</div>
<div class="td" style="left:1092px;top:829px">湖南师范...</div>
<div class="td" style="left:1212px;top:829px">2</div>
<div class="st ok" style="top:829px"><span class="sic"><svg width="14" height="14" viewBox="0 0 14 14"><circle cx="7" cy="7" r="7" fill="#1ec39f"/><path d="M3.8 7.2L6 9.2L10.2 5.2" fill="none" stroke="#fff" stroke-width="1.6"/></svg></span>已选中</div>
<div class="td" style="left:1452px;top:829px">1</div>
<div class="td" style="left:1692px;top:829px">2025-02-2...</div>
<div class="td" style="left:1812px;top:829px">学生端操...</div>
<div class="bl" style="left:496px;width:76px;top:835px;-webkit-mask-image:linear-gradient(to right,rgba(0,0,0,.6) 0%,#000 6%,#000 94%,rgba(0,0,0,.5) 100%)"></div>
<div class="bl" style="left:613px;width:48px;top:835px;-webkit-mask-image:linear-gradient(to right,rgba(0,0,0,.6) 0%,#000 6%,#000 94%,rgba(0,0,0,.5) 100%)"></div>
<div class="bl" style="left:733px;width:73px;top:835px;-webkit-mask-image:linear-gradient(to right,rgba(0,0,0,.6) 0%,#000 6%,#000 94%,rgba(0,0,0,.5) 100%)"></div>
<div class="bl" style="left:852px;width:72px;top:835px;-webkit-mask-image:linear-gradient(to right,rgba(0,0,0,.6) 0%,#000 6%,#000 94%,rgba(0,0,0,.5) 100%)"></div>
<div class="bl2" style="left:1573px;width:65px;top:835px"></div>
<div class="td" style="left:1638px;top:829px;color:#777;font-size:11px;letter-spacing:0px">...</div>
<div class="vb" style="left:291px;top:818px;height:44px"></div>
<div class="vb" style="left:346px;top:818px;height:44px"></div>
<div class="vb" style="left:466px;top:818px;height:44px"></div>
<div class="vb" style="left:586px;top:818px;height:44px"></div>
<div class="vb" style="left:706px;top:818px;height:44px"></div>
<div class="vb" style="left:826px;top:818px;height:44px"></div>
<div class="vb" style="left:946px;top:818px;height:44px"></div>
<div class="vb" style="left:1066px;top:818px;height:44px"></div>
<div class="vb" style="left:1186px;top:818px;height:44px"></div>
<div class="vb" style="left:1306px;top:818px;height:44px"></div>
<div class="vb" style="left:1426px;top:818px;height:44px"></div>
<div class="vb" style="left:1546px;top:818px;height:44px"></div>
<div class="vb" style="left:1666px;top:818px;height:44px"></div>
<div class="vb" style="left:1786px;top:818px;height:44px"></div>
<!-- scrollbars -->
<div class="abs" style="left:1871px;top:291px;width:16px;height:568px;background:#f1f1f1"></div>
<div class="abs" style="left:1875px;top:298px;width:0;height:0;border-left:4px solid transparent;border-right:4px solid transparent;border-bottom:4px solid #a3a3a3"></div>
<div class="abs" style="left:1873px;top:308px;width:12px;height:138px;background:#c1c1c1"></div>
<div class="abs" style="left:1875px;top:848px;width:0;height:0;border-left:4px solid transparent;border-right:4px solid transparent;border-top:4px solid #505050"></div>
<div class="abs" style="left:237px;top:859px;width:1634px;height:16px;background:#f1f1f1"></div>
<div class="abs" style="left:243px;top:863px;width:0;height:0;border-top:4px solid transparent;border-bottom:4px solid transparent;border-right:4px solid #a3a3a3"></div>
<div class="abs" style="left:254px;top:861px;width:1566px;height:12px;background:#c1c1c1"></div>
<div class="abs" style="left:1861px;top:863px;width:0;height:0;border-top:4px solid transparent;border-bottom:4px solid transparent;border-left:4px solid #505050"></div>
<div class="abs" style="left:1871px;top:859px;width:16px;height:16px;background:#dcdcdc"></div>
<!-- pagination -->
<div class="abs" style="left:1343px;top:894px;line-height:20px;color:#606266;font-size:13px">共 911 条</div>
<div class="abs" style="left:1408px;top:890px;width:355px;height:28px;background:#fff"></div>
<svg class="abs" style="left:1418px;top:898px" width="7" height="12" viewBox="0 0 7 12" fill="none" stroke="#c0c4cc" stroke-width="1.3"><path d="M6 1L1 6L6 11"/></svg>
<div class="abs" style="left:1441px;width:40px;top:893px;text-align:center;line-height:22px;font-weight:bold;font-size:13px;color:#7088f0">1</div>
<div class="abs" style="left:1477px;width:40px;top:893px;text-align:center;line-height:22px;font-weight:bold;font-size:13px;color:#303133">2</div>
<div class="abs" style="left:1512px;width:40px;top:893px;text-align:center;line-height:22px;font-weight:bold;font-size:13px;color:#303133">3</div>
<div class="abs" style="left:1548px;width:40px;top:893px;text-align:center;line-height:22px;font-weight:bold;font-size:13px;color:#303133">4</div>
<div class="abs" style="left:1583px;width:40px;top:893px;text-align:center;line-height:22px;font-weight:bold;font-size:13px;color:#303133">5</div>
<div class="abs" style="left:1619px;width:40px;top:893px;text-align:center;line-height:22px;font-weight:bold;font-size:13px;color:#303133">6</div>
<div class="abs" style="left:1689px;width:40px;top:893px;text-align:center;line-height:22px;font-weight:bold;font-size:13px;color:#303133">19</div>
<svg class="abs" style="left:1668px;top:903px" width="13" height="4" viewBox="0 0 13 4" fill="#303133"><circle cx="2" cy="2" r="1.6"/><circle cx="6.5" cy="2" r="1.6"/><circle cx="11" cy="2" r="1.6"/></svg>
<svg class="abs" style="left:1745px;top:898px" width="7" height="12" viewBox="0 0 7 12" fill="none" stroke="#303133" stroke-width="1.3"><path d="M1 1L6 6L1 11"/></svg>
<div class="sel" style="left:1768px;top:890px;width:99px;height:28px"><span class="v" style="left:17px;top:3px;font-size:14px">50条/页</span><span class="chev" style="top:7px;right:11px;border-color:#c0c4cc"></span></div>
<!-- collapse button -->
<div class="abs" style="left:204px;top:496px;width:24px;height:28px;background:#fff;border-radius:0 14px 14px 0;box-shadow:2px 0 3px -1px rgba(0,0,0,.08)"></div>
<svg class="abs" style="left:211px;top:503px" width="8" height="13" viewBox="0 0 8 13" fill="none" stroke="#444" stroke-width="1"><path d="M7 1L1.5 6.5L7 12"/></svg>
<!-- floating avatar -->
<div class="abs" style="left:1862px;top:702px;width:36px;height:36px;border-radius:50%;background:#f7f7f7;box-shadow:0 1px 3px rgba(0,0,0,.18)">
 <svg class="abs" style="left:3px;top:3px" width="30" height="30" viewBox="0 0 30 30">
  <defs><clipPath id="cc"><circle cx="15" cy="15" r="15"/></clipPath></defs>
  <g clip-path="url(#cc)">
  <rect width="30" height="30" fill="#dcdcdc"/>
  <path d="M6.5,20.5 C6,10 9,2.5 15,2.3 C21,2.2 24,7 23.5,14 C23.3,17 23,19 22,21 L20,20 L20,11 L10,11 L10,20 Z" fill="#5b3f37"/>
  <ellipse cx="16" cy="14.8" rx="5.8" ry="6.3" fill="#f7dcd2"/>
  <path d="M9.5,12.5 C10,7 13,5 16,5 C19.5,5 22.3,8 22,12 C19,9.5 14,9 9.5,12.5 Z" fill="#5b3f37"/>
  <path d="M6.5,20.5 C7,15 8,12 10.2,10.5 L10.5,20.5 Z" fill="#5b3f37"/>
  <ellipse cx="13.3" cy="15.5" rx="1" ry="1.1" fill="#2a2a2a"/><ellipse cx="18.6" cy="15.5" rx="1" ry="1.1" fill="#2a2a2a"/>
  <path d="M15.2,19.3 Q16,19.9 16.8,19.3" stroke="#e08080" stroke-width="0.8" fill="none"/>
  <rect x="13.5" y="20" width="5" height="5" fill="#f3d0c4"/>
  <path d="M5.5,31 C5.5,26 9,24 13.5,23.5 L16,25 L18.5,23.5 C23,24 25,26 25,31 Z" fill="#1b1b1b"/>
  </g>
 </svg>
</div>
</body></html>
